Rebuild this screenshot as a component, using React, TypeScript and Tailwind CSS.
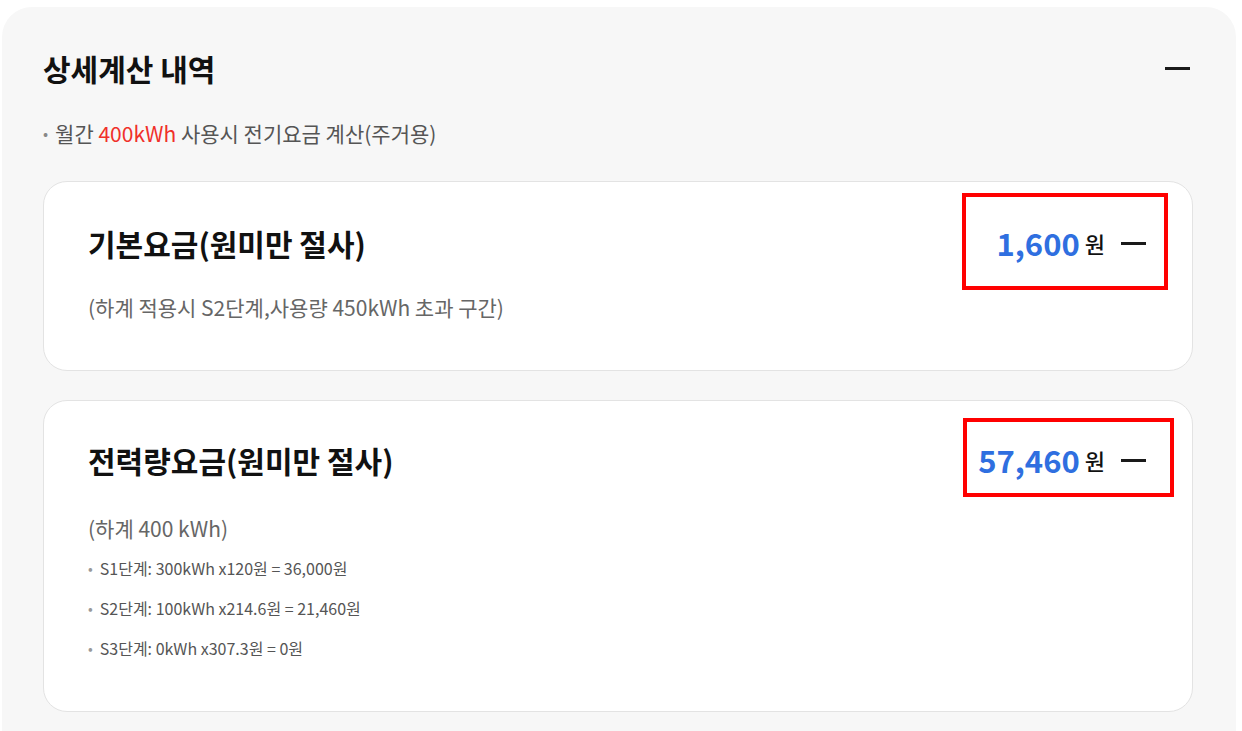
import React from "react";

const font = { fontFamily: '"Noto Sans CJK KR", "Noto Sans", sans-serif' };

const Minus = ({ className = "" }: { className?: string }) => (
  <span className={`block h-[3px] w-[25px] bg-[#1a1a1a] ${className}`} />
);

const steps = [
  "S1단계: 300kWh x120원 = 36,000원",
  "S2단계: 100kWh x214.6원 = 21,460원",
  "S3단계: 0kWh x307.3원 = 0원",
];

export default function App() {
  return (
    <div style={font} className="min-h-screen bg-white pl-[2px] pr-[6px] pt-[7px]">
      <div className="rounded-t-[30px] bg-[#f7f7f7] pb-[40px] pl-[41px] pr-[43px] pt-[41px]">
        {/* header */}
        <div className="flex items-center justify-between">
          <h2 className="text-[30px] font-bold leading-[40px] text-[#111]">상세계산 내역</h2>
          <Minus className="mr-[3px]" />
        </div>
        <p className="mt-[30px] flex items-center text-[21px] leading-[30px] text-[#555]">
          <span className="mr-[7px] text-[15px] text-[#888]">•</span>
          월간&nbsp;<span className="text-[#f0302a]">400kWh</span>&nbsp;사용시 전기요금 계산(주거용)
        </p>

        {/* 기본요금 */}
        <div className="relative mt-[33px] rounded-[24px] border border-[#e3e3e3] bg-white pb-[48px] pl-[44px] pr-[46px] pt-[41px]">
          <div className="flex items-center justify-between">
            <h3 className="text-[30px] font-bold leading-[40px] text-[#111]">기본요금(원미만 절사)</h3>
            <div className="flex items-center">
              <span className="text-[31px] font-bold leading-[40px] text-[#2f6fe0]">1,600</span>
              <span className="ml-[5px] text-[22px] font-medium text-[#111]">원</span>
              <Minus className="ml-[16px]" />
            </div>
          </div>
          <p className="mt-[29px] text-[21px] leading-[30px] text-[#666]">
            (하계 적용시 S2단계,사용량 450kWh 초과 구간)
          </p>
          <div className="pointer-events-none absolute left-[918px] top-[11px] h-[97px] w-[206px] border-[4px] border-[#ff0000]" />
        </div>

        {/* 전력량요금 */}
        <div className="relative mt-[29px] rounded-[24px] border border-[#e3e3e3] bg-white pb-[43px] pl-[44px] pr-[46px] pt-[39px]">
          <div className="flex items-center justify-between">
            <h3 className="text-[30px] font-bold leading-[40px] text-[#111]">전력량요금(원미만 절사)</h3>
            <div className="flex items-center">
              <span className="text-[31px] font-bold leading-[40px] text-[#2f6fe0]">57,460</span>
              <span className="ml-[5px] text-[22px] font-medium text-[#111]">원</span>
              <Minus className="ml-[16px]" />
            </div>
          </div>
          <p className="mt-[33px] text-[21px] leading-[30px] text-[#666]">(하계 400 kWh)</p>
          <ul className="mt-[5px]">
            {steps.map((s) => (
              <li key={s} className="flex items-center text-[16px] leading-[40px] text-[#555]">
                <span className="mr-[7px] text-[14px] text-[#999]">•</span>
                {s}
              </li>
            ))}
          </ul>
          <div className="pointer-events-none absolute left-[919px] top-[17px] h-[79px] w-[211px] border-[4px] border-[#ff0000]" />
        </div>
      </div>
    </div>
  );
}
